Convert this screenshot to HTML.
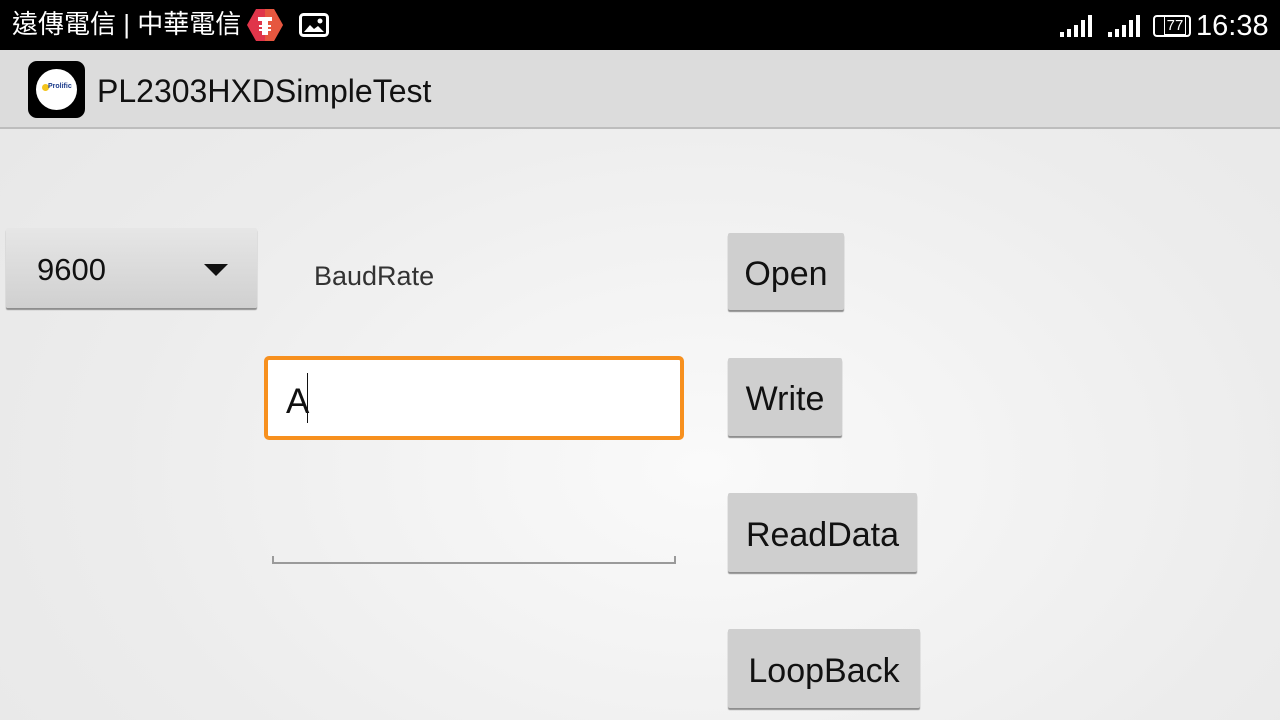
<!DOCTYPE html>
<html><head><meta charset="utf-8"><style>
*{margin:0;padding:0;box-sizing:border-box}
body{width:1280px;height:720px;overflow:hidden;position:relative;font-family:"Liberation Sans","Noto Sans CJK TC",sans-serif;background:radial-gradient(ellipse at 55% 65%,#fafafa 0%,#ececec 60%,#e6e6e6 100%)}
.abs{position:absolute}
.sb{left:0;top:0;width:1280px;height:50px;background:#000;color:#fff}
.ab{left:0;top:50px;width:1280px;height:79px;background:#dcdcdc;border-bottom:2px solid #bdbdbd}
.btn{position:absolute;background:#cfcfcf;border-radius:2px;box-shadow:0 2px 1px #8e8e8e;font-size:34px;color:#111;display:flex;align-items:center;justify-content:center;padding-top:5px}
</style></head><body>
<div class="abs sb">
 <div class="abs" style="left:12px;top:8px;font-size:26px;line-height:32px;white-space:nowrap">遠傳電信 | 中華電信</div>
 <svg class="abs" style="left:246px;top:8px" width="38" height="34" viewBox="0 0 38 34"><polygon points="10,1 28,1 37,17 28,33 10,33 1,17" fill="#e0354a"/><polygon points="19,1 28,1 37,17 28,33 19,33" fill="#e8663a" opacity=".7"/><rect x="12" y="9" width="14" height="4" fill="#fff"/><rect x="16" y="13" width="6" height="14" fill="#fff"/><rect x="13" y="17" width="12" height="2" fill="#fff"/><rect x="13" y="21" width="12" height="2" fill="#fff"/></svg>
 <svg class="abs" style="left:299px;top:13px" width="30" height="24" viewBox="0 0 30 24"><rect x="1.5" y="1.5" width="27" height="21" rx="3" fill="none" stroke="#fff" stroke-width="3"/><path d="M5 19 L11 12 L15 16 L19 13 L25 19Z" fill="#fff"/><circle cx="21" cy="8" r="2.5" fill="#fff"/></svg>
 <svg class="abs" style="left:1060px;top:14px" width="34" height="24"><rect x="0" y="18" width="4" height="5" fill="#fff"/><rect x="7" y="15" width="4" height="8" fill="#fff"/><rect x="14" y="11" width="4" height="12" fill="#fff"/><rect x="21" y="6" width="4" height="17" fill="#fff"/><rect x="28" y="1" width="4" height="22" fill="#fff"/></svg>
 <svg class="abs" style="left:1108px;top:14px" width="34" height="24"><rect x="0" y="18" width="4" height="5" fill="#fff"/><rect x="7" y="15" width="4" height="8" fill="#fff"/><rect x="14" y="11" width="4" height="12" fill="#fff"/><rect x="21" y="6" width="4" height="17" fill="#fff"/><rect x="28" y="1" width="4" height="22" fill="#fff"/></svg>
 <div class="abs" style="left:1153px;top:15px;width:38px;height:22px;border:2.5px solid #fff;border-radius:4px;font-size:15px;line-height:17px;text-align:center;padding-left:6px"><span style="border:1.5px solid #fff;padding:0 2px">77</span></div>
 <div class="abs" style="left:1196px;top:9px;font-size:29px;line-height:34px">16:38</div>
</div>
<div class="abs ab">
 <div class="abs" style="left:28px;top:11px;width:57px;height:57px;background:#000;border-radius:9px"><div class="abs" style="left:8px;top:8px;width:41px;height:41px;border-radius:50%;background:#fff"><div class="abs" style="left:6px;top:15px;width:7px;height:7px;border-radius:50%;background:#f3c41c"></div><div class="abs" style="left:12px;top:14px;font-size:7px;color:#1a3a8a;font-weight:bold">Prolific</div></div></div>
 <div class="abs" style="left:97px;top:22px;font-size:32px;line-height:38px;color:#111">PL2303HXDSimpleTest</div>
</div>
<div class="abs" style="left:6px;top:228px;width:251px;height:80px;background:linear-gradient(#e6e6e6,#d0d0d0);border-radius:2px;box-shadow:0 2px 1px #8e8e8e"><div class="abs" style="left:31px;top:24px;font-size:31px;color:#111">9600</div><div class="abs" style="left:198px;top:36px;width:0;height:0;border-left:12px solid transparent;border-right:12px solid transparent;border-top:12px solid #111"></div></div>
<div class="abs" style="left:314px;top:261px;font-size:27px;color:#333">BaudRate</div>
<div class="abs" style="left:264px;top:356px;width:420px;height:84px;background:#fff;border:4px solid #f7901e;border-radius:5px"><div class="abs" style="left:18px;top:22px;font-size:35px;color:#111">A</div><div class="abs" style="left:39px;top:13px;width:1px;height:50px;background:#111"></div></div>
<div class="abs" style="left:272px;top:562px;width:404px;height:2px;background:#9a9a9a"></div>
<div class="abs" style="left:272px;top:556px;width:2px;height:8px;background:#9a9a9a"></div>
<div class="abs" style="left:674px;top:556px;width:2px;height:8px;background:#9a9a9a"></div>
<div class="btn" style="left:728px;top:233px;width:116px;height:77px">Open</div>
<div class="btn" style="left:728px;top:358px;width:114px;height:78px">Write</div>
<div class="btn" style="left:728px;top:493px;width:189px;height:79px">ReadData</div>
<div class="btn" style="left:728px;top:629px;width:192px;height:79px">LoopBack</div>
</body></html>
